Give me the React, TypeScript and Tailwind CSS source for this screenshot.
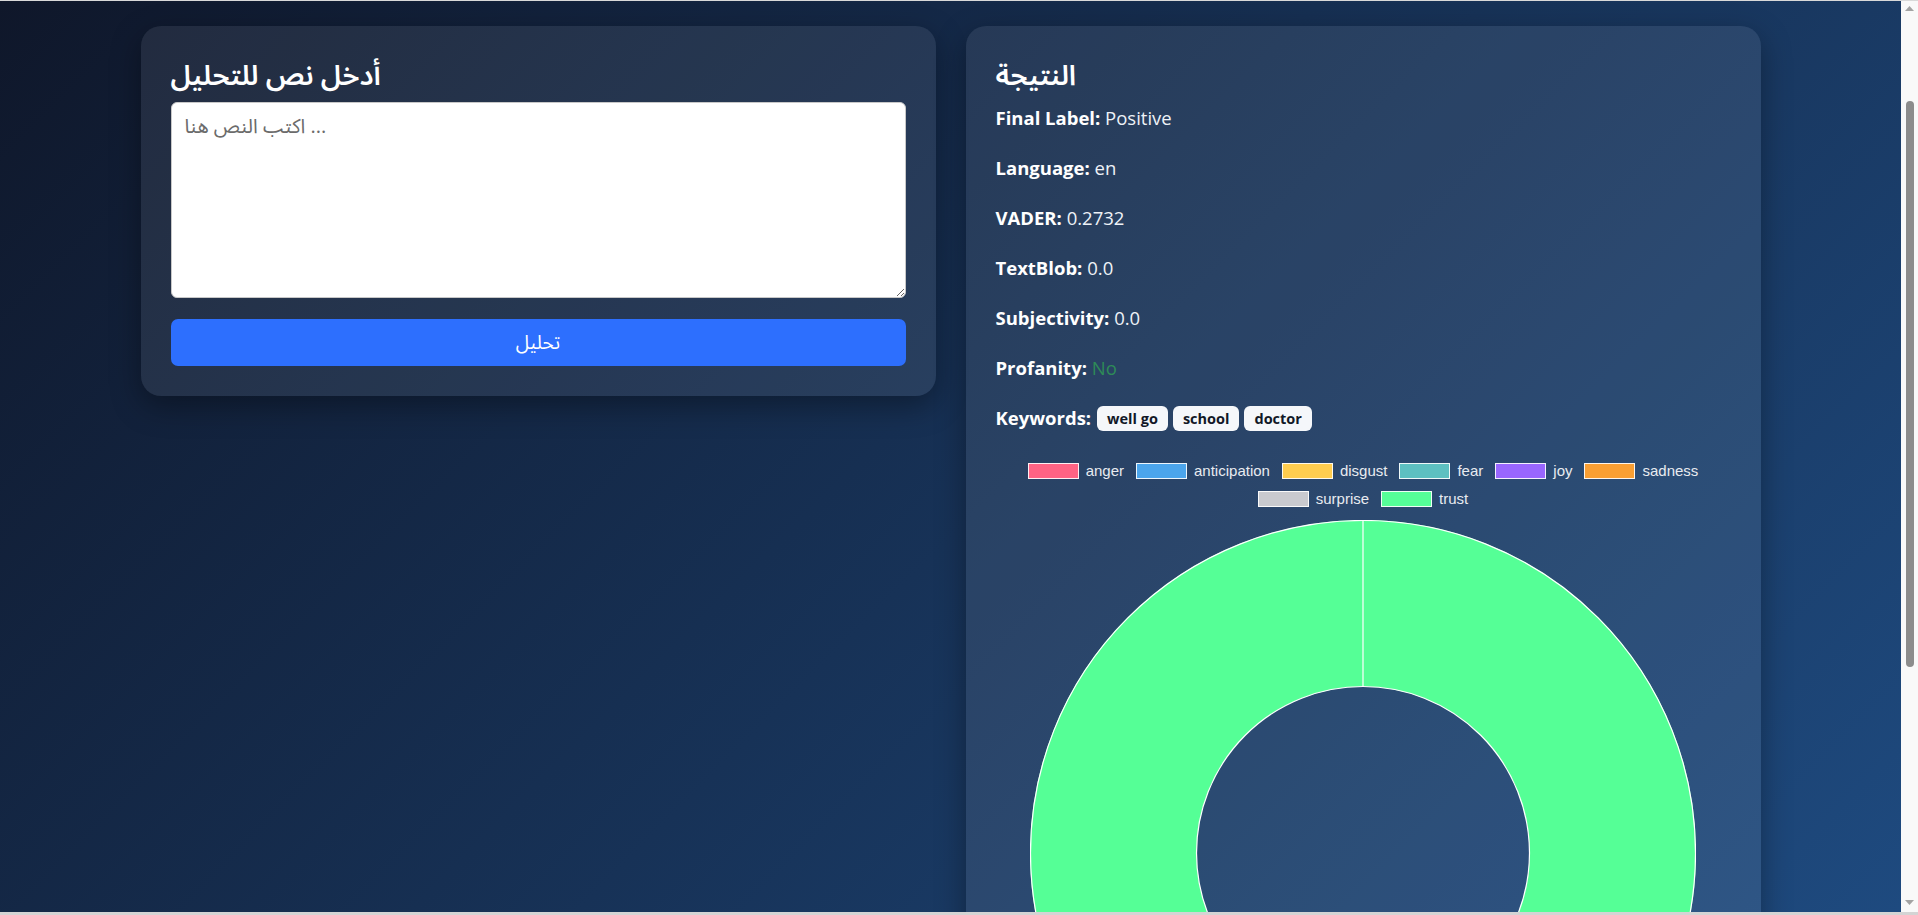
import React from "react";

const legendItems = [
  { label: "anger", cls: "bg-[#ff6384]" },
  { label: "anticipation", cls: "bg-[#4ba5ec]" },
  { label: "disgust", cls: "bg-[#ffcd4f]" },
  { label: "fear", cls: "bg-[#5dc0c1]" },
  { label: "joy", cls: "bg-[#9966ff]" },
  { label: "sadness", cls: "bg-[#f99f33]" },
  { label: "surprise", cls: "bg-[#c9cacf]" },
  { label: "trust", cls: "bg-[#55ff98]" },
];

const rows: [string, string][] = [
  ["Final Label:", "Positive"],
  ["Language:", "en"],
  ["VADER:", "0.2732"],
  ["TextBlob:", "0.0"],
  ["Subjectivity:", "0.0"],
];

const font = "font-['Open_Sans','Noto_Sans_Arabic','DejaVu_Sans',sans-serif]";

function Donut() {
  const c = 333;
  const outer = 333;
  const inner = 166.5;
  return (
    <svg width={666} height={666} viewBox="0 0 666 666">
      <circle cx={c} cy={c} r={(outer + inner) / 2} fill="none" stroke="#55ff96" strokeWidth={outer - inner} />
      <circle cx={c} cy={c} r={outer - 0.5} fill="none" stroke="#ffffff" strokeWidth={1.2} />
      <circle cx={c} cy={c} r={inner} fill="none" stroke="#ffffff" strokeWidth={1.2} />
      <line x1={c} y1={0} x2={c} y2={c - inner} stroke="#ffffff" strokeWidth={1.2} />
    </svg>
  );
}

function Scrollbar() {
  return (
    <aside className="flex w-[17px] shrink-0 flex-col items-center bg-[#f9f9f9]">
      <svg width="9" height="5" viewBox="0 0 9 5" className="mt-[5px]">
        <polygon points="4.5,0 9,5 0,5" fill="#a3a3a3" />
      </svg>
      <div className="mt-[90px] h-[566px] w-[8px] rounded-full bg-[#8c8c8c]" />
      <svg width="9" height="5" viewBox="0 0 9 5" className="mt-auto mb-[7px]">
        <polygon points="0,0 9,0 4.5,5" fill="#a3a3a3" />
      </svg>
    </aside>
  );
}

export default function App() {
  return (
    <div className={`flex h-[915px] w-full flex-col overflow-hidden ${font} text-white`}>
      <div className="h-px shrink-0 bg-[#d9d9d9]" />
      <div className="flex min-h-0 flex-1">
        <main className="min-w-0 flex-1 overflow-hidden bg-[linear-gradient(135deg,#0f172a_0%,#1e4a7f_100%)]">
          <div className="mx-auto grid w-[1620px] grid-cols-2 items-start gap-[30px] pt-[25px]">
            {/* Left card */}
            <div className="rounded-[20px] bg-white/[0.08] p-[30px] shadow-[0_10px_30px_rgba(0,0,0,0.35)]">
              <h2 className="mb-[10px] text-[28px] font-semibold leading-[36px]">أدخل نص للتحليل</h2>
              <textarea
                className="block h-[196px] w-full rounded-[6px] border border-[#c8c8c8] bg-white px-[13px] py-[8px] text-[20px] leading-[30px] text-[#222] placeholder:text-[#6b6b6b] outline-none"
                placeholder="اكتب النص هنا ..."
              />
              <button className="mt-[21px] h-[47px] w-full rounded-[7px] bg-[#2d6ffe] text-[19px] text-white">
                تحليل
              </button>
            </div>

            {/* Right card */}
            <div className="rounded-[20px] bg-white/[0.08] px-[30px] pt-[30px] pb-[30px] shadow-[0_10px_30px_rgba(0,0,0,0.35)]">
              <h2 className="mb-[10px] text-[28px] font-semibold leading-[36px]">النتيجة</h2>
              {rows.map(([k, v]) => (
                <p key={k} className="mb-[18px] h-[32px] text-[18.5px] leading-[32px] text-[#eef2f7]">
                  <b className="font-bold text-white">{k}</b> {v}
                </p>
              ))}
              <p className="mb-[18px] h-[32px] text-[18.5px] leading-[32px] text-[#eef2f7]">
                <b className="font-bold text-white">Profanity:</b> <span className="text-[#2e8b57]">No</span>
              </p>
              <div className="flex h-[32px] items-center text-[18.5px]">
                <b className="mr-[6px] font-bold text-white">Keywords:</b>
                <div className="flex gap-[5px]">
                  {["well go", "school", "doctor"].map((w) => (
                    <span
                      key={w}
                      className="h-[25px] rounded-[6px] bg-[#f5f7fa] px-[10px] text-[14.5px] font-bold leading-[25px] text-[#111827]"
                    >
                      {w}
                    </span>
                  ))}
                </div>
              </div>

              <div className="mt-[23px] flex flex-wrap justify-center gap-x-[12px] font-['Liberation_Sans',Arial,sans-serif] text-[15px] text-[#e8ebf0]">
                {legendItems.map((it) => (
                  <div key={it.label} className="flex h-[28px] items-center">
                    <span className={`mr-[7px] h-[16px] w-[51px] border border-white/90 ${it.cls}`} />
                    <span className="leading-[28px]">{it.label}</span>
                  </div>
                ))}
              </div>

              <div className="mt-[7px] flex justify-center">
                <Donut />
              </div>
            </div>
          </div>
        </main>
        <Scrollbar />
      </div>
      <div className="h-[3px] shrink-0 bg-[#d4d4d4]" />
    </div>
  );
}
